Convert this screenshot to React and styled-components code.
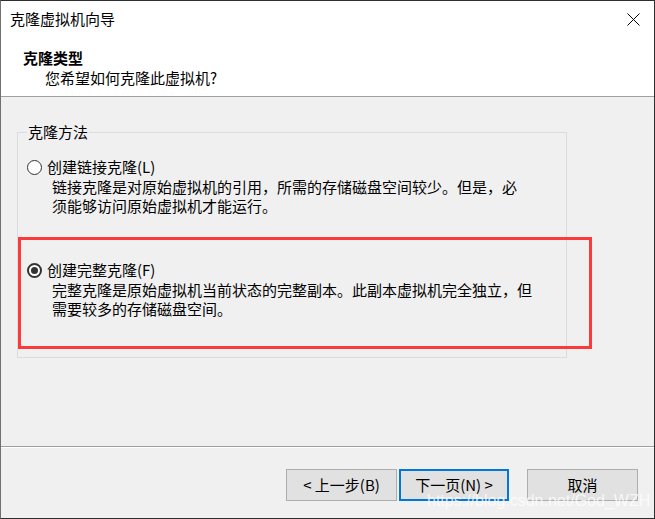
import React from "react";
import styled, { createGlobalStyle, css } from "styled-components";

const GlobalStyle = createGlobalStyle`
  html, body {
    margin: 0;
    padding: 0;
    background: #ffffff;
  }
  * {
    box-sizing: border-box;
  }
`;

const Window = styled.div`
  position: relative;
  width: 655px;
  height: 519px;
  display: flex;
  flex-direction: column;
  border: 1px solid #2e2e2e;
  border-left: 1px solid #707070;
  background: #f0f0f0;
  font-family: "Noto Sans CJK SC", "Microsoft YaHei", sans-serif;
  font-size: 15px;
  color: #000;
  overflow: hidden;
`;

const Header = styled.div`
  height: 96px;
  background: #ffffff;
  border-bottom: 1px solid #a0a0a0;
  flex-shrink: 0;
`;

const TitleBar = styled.div`
  height: 36px;
  display: flex;
  align-items: center;
  justify-content: space-between;
  padding: 0 14px 0 9px;
  line-height: 20px;
`;

const CloseButton = styled.div`
  width: 14px;
  height: 14px;
  display: flex;
  align-items: center;
  justify-content: center;
`;

const Heading = styled.div`
  margin-top: 11px;
  padding-left: 22px;
  line-height: 20px;
  font-weight: bold;
`;

const SubHeading = styled.div`
  padding-left: 44px;
  line-height: 20px;
`;

const Body = styled.div`
  flex: 1;
  padding: 25px 0 0 16px;
`;

const GroupBox = styled.fieldset`
  margin: 0;
  width: 550px;
  height: 236px;
  border: 1px solid #dcdcdc;
  padding: 15px 8px 0 9px;
`;

const Legend = styled.legend`
  padding: 0 1px;
  line-height: 20px;
`;

const Option = styled.div`
  display: flex;
  flex-direction: column;
  margin-bottom: ${({ $gap }) => $gap || 0}px;
`;

const OptionRow = styled.div`
  display: flex;
  align-items: center;
  gap: 5px;
  line-height: 20px;
`;

const Radio = styled.span`
  width: 15px;
  height: 15px;
  border-radius: 50%;
  border: 1px solid #333333;
  background: #ffffff;
  display: flex;
  align-items: center;
  justify-content: center;
  ${({ $checked }) =>
    $checked &&
    css`
      border: 2px solid #333333;
      &::after {
        content: "";
        width: 7px;
        height: 7px;
        border-radius: 50%;
        background: #333333;
      }
    `}
`;

const Description = styled.div`
  padding-left: 25px;
  line-height: 19px;
`;

const Footer = styled.div`
  height: 72px;
  flex-shrink: 0;
  border-top: 1px solid #a0a0a0;
  box-shadow: inset 0 1px 0 #ffffff;
  display: flex;
  justify-content: flex-end;
  align-items: flex-start;
  padding: 22px 16px 0 0;
`;

const Button = styled.div`
  width: ${({ $w }) => $w || 111}px;
  height: 32px;
  margin-left: ${({ $ml }) => $ml || 0}px;
  background: #e1e1e1;
  border: 1px solid #adadad;
  display: flex;
  align-items: center;
  justify-content: center;
  line-height: 16px;
  ${({ $default }) =>
    $default &&
    css`
      border: 2px solid #0078d7;
    `}
`;

const Highlight = styled.div`
  position: absolute;
  left: 17px;
  top: 236px;
  width: 574px;
  height: 112px;
  border: 3px solid #fb3b3b;
  pointer-events: none;
`;

const Watermark = styled.div`
  position: absolute;
  left: 426px;
  top: 494px;
  font-family: "Liberation Sans", Arial, sans-serif;
  font-size: 16px;
  line-height: 12px;
  color: rgba(255, 255, 255, 0.75);
  pointer-events: none;
`;

const App = () => {
  return (
    <>
      <GlobalStyle />
      <Window>
        <Header>
          <TitleBar>
            <span>克隆虚拟机向导</span>
            <CloseButton>
              <svg width="13" height="13" viewBox="0 0 13 13">
                <path d="M0.5 0.5L12.5 12.5M12.5 0.5L0.5 12.5" stroke="#000" strokeWidth="1" />
              </svg>
            </CloseButton>
          </TitleBar>
          <Heading>克隆类型</Heading>
          <SubHeading>您希望如何克隆此虚拟机?</SubHeading>
        </Header>

        <Body>
          <GroupBox>
            <Legend>克隆方法</Legend>
            <Option $gap={45}>
              <OptionRow>
                <Radio />
                <span>创建链接克隆(L)</span>
              </OptionRow>
              <Description>
                链接克隆是对原始虚拟机的引用，所需的存储磁盘空间较少。但是，必
                <br />
                须能够访问原始虚拟机才能运行。
              </Description>
            </Option>
            <Option>
              <OptionRow>
                <Radio $checked />
                <span>创建完整克隆(F)</span>
              </OptionRow>
              <Description>
                完整克隆是原始虚拟机当前状态的完整副本。此副本虚拟机完全独立，但
                <br />
                需要较多的存储磁盘空间。
              </Description>
            </Option>
          </GroupBox>
        </Body>

        <Footer>
          <Button>&lt; 上一步(B)</Button>
          <Button $w={110} $ml={2} $default>
            下一页(N) &gt;
          </Button>
          <Button $ml={18}>取消</Button>
        </Footer>

        <Highlight />
        <Watermark>https://blog.csdn.net/God_WZH</Watermark>
      </Window>
    </>
  );
};

export default App;
